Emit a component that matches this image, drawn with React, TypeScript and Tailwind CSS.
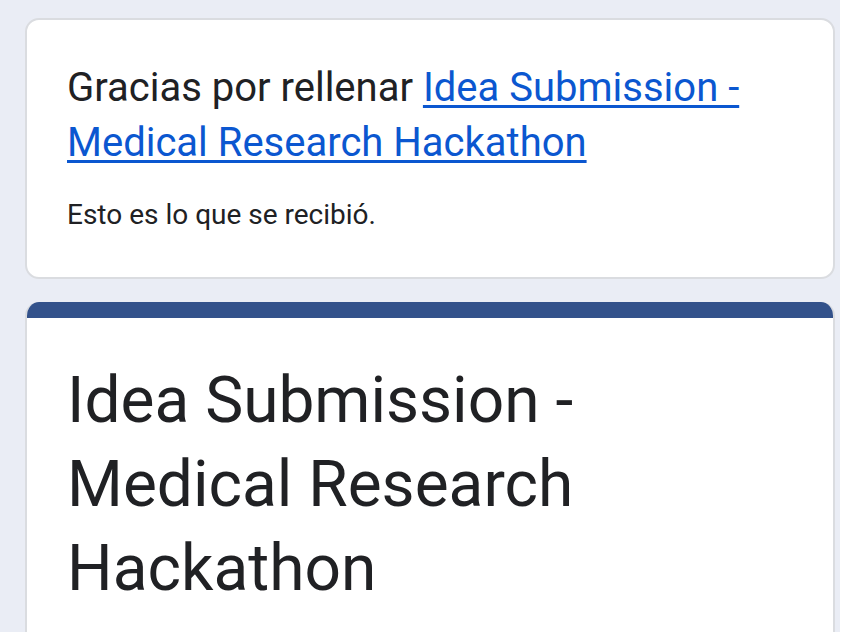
export default function App() {
  return (
    <div className="flex min-h-screen bg-white" style={{ fontFamily: "Roboto, Arial, sans-serif" }}>
      <div className="w-[840px] bg-[#eaedf5] pt-[18px] pl-[25px] pr-[5px] flex flex-col gap-[23px] h-[632px] overflow-hidden">
        {/* Confirmation card */}
        <div className="bg-white border-2 border-[#dadce0] rounded-[14px] px-[40px] pt-[40px] pb-[42px]">
          <p className="text-[40px] leading-[55px] text-[#202124]">
            Gracias por rellenar{" "}
            <a href="#" className="text-[#0b57d0] underline underline-offset-[4px] decoration-[3px]">
              Idea Submission - Medical Research Hackathon
            </a>
          </p>
          <p className="mt-[25px] text-[28px] leading-[40px] text-[#202124]">Esto es lo que se recibió.</p>
        </div>

        {/* Form header card */}
        <div className="bg-white border-x-2 border-[#dadce0] rounded-t-[14px] overflow-hidden flex-1">
          <div className="h-[16px] bg-[#33528b] -mx-[2px]" />
          <div className="px-[40px] pt-[41px]">
            <h1 className="text-[64px] leading-[84px] text-[#202124] font-normal">
              Idea Submission - Medical Research Hackathon
            </h1>
          </div>
        </div>
      </div>
      <div className="flex-1 bg-white" />
    </div>
  );
}
